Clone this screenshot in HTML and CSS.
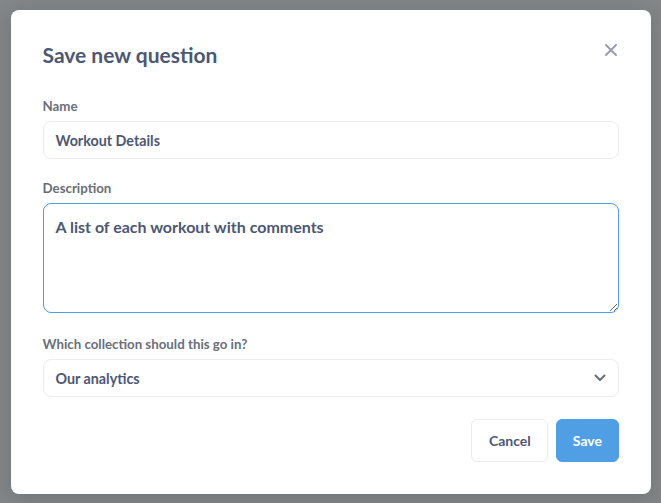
FILE: index.html
```html
<!DOCTYPE html>
<html lang="en">
<head>
<meta charset="utf-8">
<title>Save new question</title>
<link rel="stylesheet" href="styles.css">
</head>
<body>
<div class="overlay">
  <div class="modal">
    <div class="modal-header">
      <h2 class="modal-title">Save new question</h2>
      <button class="close-btn" aria-label="Close">
        <svg width="12" height="12" viewBox="0 0 12 12"><path d="M1 1 L11 11 M11 1 L1 11" stroke="currentColor" stroke-width="1.8" stroke-linecap="round" fill="none"/></svg>
      </button>
    </div>
    <div class="field">
      <label class="field-label">Name</label>
      <div class="text-input">Workout Details</div>
    </div>
    <div class="field field-tall">
      <label class="field-label">Description</label>
      <textarea class="text-area" id="desc">A list of each workout with comments</textarea>
    </div>
    <div class="field field-last">
      <label class="field-label">Which collection should this go in?</label>
      <div class="select-input">
        <span>Our analytics</span>
        <svg class="chevron" width="12" height="8" viewBox="0 0 12 8"><path d="M1.5 1.5 L6 6 L10.5 1.5" stroke="currentColor" stroke-width="2" stroke-linecap="round" stroke-linejoin="round" fill="none"/></svg>
      </div>
    </div>
    <div class="modal-footer">
      <button class="btn btn-cancel">Cancel</button>
      <button class="btn btn-primary">Save</button>
    </div>
  </div>
</div>
<script src="script.js"></script>
</body>
</html>
```
FILE: styles.css
```css
* { box-sizing: border-box; }
html, body { margin: 0; padding: 0; }
body {
  font-family: Lato, "Noto Sans", sans-serif;
  background: #828689;
}
.overlay {
  width: 661px;
  height: 503px;
  display: flex;
  align-items: center;
  justify-content: center;
}
.modal {
  width: 640px;
  height: 484px;
  background: #fff;
  border-radius: 8px;
  padding: 32px;
  box-shadow: 0 4px 20px rgba(0,0,0,0.15);
}
.modal-header {
  display: flex;
  justify-content: space-between;
  align-items: flex-start;
  margin-bottom: 30px;
}
.modal-title {
  margin: 0;
  font-size: 21px;
  line-height: 26px;
  font-weight: 700;
  color: #4c5773;
}
.close-btn {
  border: none;
  background: none;
  padding: 0;
  margin: 2px 2px 0 0;
  width: 12px;
  height: 12px;
  color: #949aab;
  display: flex;
}
.field {
  display: flex;
  flex-direction: column;
  margin-bottom: 21px;
}
.field-tall { margin-bottom: 23px; }
.field-last { margin-bottom: 22px; }
.field-label {
  font-size: 13.3px;
  line-height: 16px;
  font-weight: 700;
  color: #696e7b;
  margin-bottom: 7px;
}
.text-input, .select-input {
  height: 38px;
  border: 1px solid #eeecec;
  border-radius: 8px;
  padding: 1px 12px 0 12px;
  font-size: 14.3px;
  font-weight: 700;
  color: #4c5773;
  display: flex;
  align-items: center;
}
.select-input {
  justify-content: space-between;
}
.chevron { color: #696e7b; }
.text-area {
  display: block;
  width: 100%;
  height: 110px;
  border: 1px solid #509ee3;
  border-radius: 8px;
  padding: 11px 12px 10px;
  font-family: Lato, "Noto Sans", sans-serif;
  font-size: 16px;
  line-height: 24px;
  font-weight: 700;
  color: #4c5773;
  outline: none;
  resize: vertical;
  background: #fff;
}
.modal-footer {
  display: flex;
  justify-content: flex-end;
  gap: 8px;
}
.btn {
  height: 43px;
  border-radius: 6px;
  font-family: Lato, "Noto Sans", sans-serif;
  font-size: 14px;
  font-weight: 700;
  border: 1px solid #eeecec;
}
.btn-cancel {
  background: #fff;
  color: #4c5773;
  padding: 0 16.5px;
}
.btn-primary {
  background: #509ee3;
  border-color: #509ee3;
  color: #fff;
  padding: 0 15.5px;
}
```
FILE: script.js
```js
var t = document.getElementById('desc');
t.focus();
t.setSelectionRange(t.value.length, t.value.length);
```
